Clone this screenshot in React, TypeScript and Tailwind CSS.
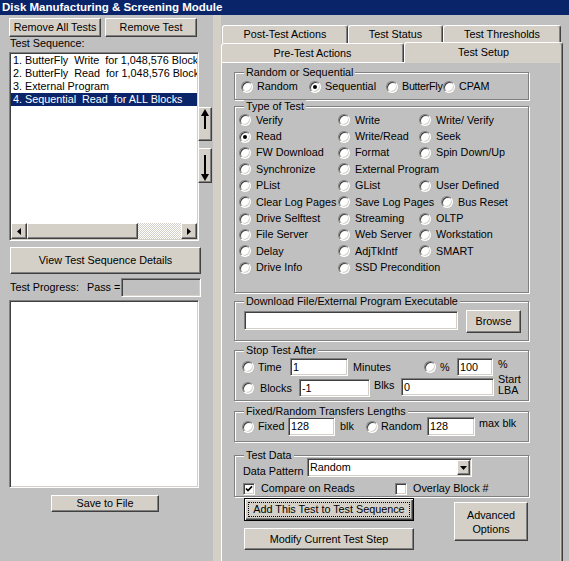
import React from 'react';

const raised =
  'bg-[#d4d0c8] border border-t-white border-l-white border-r-[#404040] border-b-[#404040] shadow-[inset_-1px_-1px_#808080]';
const sunkenEdge =
  'border border-t-[#808080] border-l-[#808080] border-r-white border-b-white shadow-[inset_1px_1px_#404040,inset_-1px_-1px_#d4d0c8]';
const sunken = `bg-white ${sunkenEdge}`;

const Btn: React.FC<{ className?: string; children?: React.ReactNode }> = ({ className = '', children }) => (
  <div className={`${raised} flex items-center justify-center whitespace-nowrap ${className}`}>{children}</div>
);

const Field: React.FC<{ className?: string; value?: string; gray?: boolean }> = ({ className = '', value, gray }) => (
  <div
    className={`${sunkenEdge} ${gray ? 'bg-[#c0c0c0]' : 'bg-white'} flex items-center pl-[2px] whitespace-nowrap overflow-hidden ${className}`}
  >
    {value}
  </div>
);

const Radio: React.FC<{ checked?: boolean }> = ({ checked }) => (
  <span className="flex w-[12px] h-[12px] shrink-0 items-center justify-center rounded-full bg-white border border-t-[#808080] border-l-[#808080] border-r-white border-b-white shadow-[inset_1px_1px_#404040,inset_-1px_-1px_#d4d0c8]">
    {checked && <span className="w-[4px] h-[4px] rounded-full bg-black" />}
  </span>
);

const Check: React.FC<{ checked?: boolean }> = ({ checked }) => (
  <span className="flex w-[12px] h-[12px] shrink-0 items-center justify-center bg-white border border-t-[#808080] border-l-[#808080] border-r-white border-b-white shadow-[inset_1px_1px_#404040,inset_-1px_-1px_#d4d0c8]">
    {checked && (
      <svg width="8" height="8" viewBox="0 0 8 8">
        <path d="M1 3.5 L3 5.6 L7 1.4" stroke="black" strokeWidth="1.7" fill="none" />
      </svg>
    )}
  </span>
);

const Option: React.FC<{ label: string; checked?: boolean; className?: string; gap?: string; labelClass?: string }> = ({
  label,
  checked,
  className = '',
  gap = 'gap-[4px]',
  labelClass = '',
}) => (
  <div className={`flex items-center whitespace-nowrap ${gap} ${className}`}>
    <Radio checked={checked} />
    <span className={labelClass}>{label}</span>
  </div>
);

const Group: React.FC<{ title: string; className?: string; children?: React.ReactNode }> = ({
  title,
  className = '',
  children,
}) => (
  <div
    className={`relative w-[295px] shrink-0 border border-[#808080] shadow-[1px_1px_0_#fff,inset_1px_1px_0_#fff] ${className}`}
  >
    <span className="absolute left-[9px] -top-[7px] px-[2px] bg-[#c0c0c0] whitespace-nowrap">{title}</span>
    {children}
  </div>
);

const ArrowLeft = () => (
  <svg width="4" height="7" viewBox="0 0 4 7">
    <polygon points="4,0 0,3.5 4,7" fill="black" />
  </svg>
);
const ArrowRight = () => (
  <svg width="4" height="7" viewBox="0 0 4 7">
    <polygon points="0,0 4,3.5 0,7" fill="black" />
  </svg>
);

type Cell = { label: string; checked?: boolean; clip?: boolean; shift?: boolean } | null;

const testTypes: Cell[][] = [
  [{ label: 'Verify' }, { label: 'Write' }, { label: 'Write/ Verify' }],
  [{ label: 'Read', checked: true }, { label: 'Write/Read' }, { label: 'Seek' }],
  [{ label: 'FW Download' }, { label: 'Format' }, { label: 'Spin Down/Up' }],
  [{ label: 'Synchronize' }, { label: 'External Program' }, null],
  [{ label: 'PList' }, { label: 'GList' }, { label: 'User Defined' }],
  [{ label: 'Clear Log Pages' }, { label: 'Save Log Pages' }, { label: 'Bus Reset', shift: true }],
  [{ label: 'Drive Selftest' }, { label: 'Streaming' }, { label: 'OLTP' }],
  [{ label: 'File Server' }, { label: 'Web Server', clip: true }, { label: 'Workstation' }],
  [{ label: 'Delay' }, { label: 'AdjTkIntf' }, { label: 'SMART' }],
  [{ label: 'Drive Info' }, { label: 'SSD Precondition' }, null],
];

const sequence = [
  '1. ButterFly  Write  for 1,048,576 Blocks',
  '2. ButterFly  Read  for 1,048,576 Blocks',
  '3. External Program',
  '4. Sequential  Read  for ALL Blocks',
];

function LeftPane() {
  return (
    <div className="w-[213px] shrink-0 flex flex-col pl-[9px] pt-[3px]">
      <div className="flex gap-[4px]">
        <Btn className="w-[92px] h-[19px]">Remove All Tests</Btn>
        <Btn className="w-[92px] h-[19px]">Remove Test</Btn>
      </div>
      <div className="pl-[1px] h-[13px] whitespace-nowrap">Test Sequence:</div>
      <div className="flex mt-[2px]">
        <div className={`${sunken} w-[190px] h-[189px] p-[1px] flex flex-col`}>
          <div className="flex-1 overflow-hidden">
            {sequence.map((s, i) => (
              <div
                key={i}
                className={`h-[13px] pl-[2px] whitespace-pre overflow-hidden ${
                  i === 3 ? 'bg-[#0a246a] text-white' : ''
                }`}
              >
                {s}
              </div>
            ))}
          </div>
          <div className="h-[16px] flex shrink-0">
            <Btn className="w-[16px] h-[16px]">
              <ArrowLeft />
            </Btn>
            <Btn className="w-[111px] h-[16px]" />
            <div className="flex-1 bg-[repeating-conic-gradient(#ffffff_0%_25%,#d4d0c8_0%_50%)] bg-[length:2px_2px]" />
            <Btn className="w-[16px] h-[16px]">
              <ArrowRight />
            </Btn>
          </div>
        </div>
        <div className="w-[14px] -ml-[1px] flex flex-col">
          <div className={`${raised} mt-[55px] h-[34px] flex justify-center items-start pt-[1px]`}>
            <svg width="10" height="20" viewBox="0 0 10 20">
              <polygon points="5,0 1,7 9,7" fill="black" />
              <rect x="4" y="6" width="2" height="14" fill="black" />
            </svg>
          </div>
          <div className={`${raised} mt-[7px] h-[35px] flex justify-center items-end pb-[1px]`}>
            <svg width="10" height="26" viewBox="0 0 10 26">
              <rect x="4" y="0" width="2" height="20" fill="black" />
              <polygon points="1,19 9,19 5,26" fill="black" />
            </svg>
          </div>
        </div>
      </div>
      <Btn className="mt-[6px] ml-[1px] w-[191px] h-[27px]">View Test Sequence Details</Btn>
      <div className="mt-[4px] w-[192px] h-[19px] flex items-center whitespace-nowrap">
        <span className="pl-[1px]">Test Progress:</span>
        <span className="ml-[8px]">Pass =</span>
        <Field gray className="ml-auto w-[80px] h-[19px]" />
      </div>
      <div className={`${sunken} mt-[3px] w-[190px] h-[188px]`} />
      <Btn className="mt-[7px] ml-[42px] w-[108px] h-[17px]">Save to File</Btn>
    </div>
  );
}

const backTab =
  'h-full bg-[#d4d0c8] border-t border-l border-t-white border-l-white border-r border-r-[#404040] rounded-t-[3px] shadow-[inset_-1px_0_#808080] flex items-center justify-center whitespace-nowrap';

function RightPane() {
  return (
    <div className="flex-1 pt-[10px] flex flex-col">
      <div className="w-[342px] flex-1 flex flex-col">
        <div className="flex h-[18px] pl-[1px]">
          <div className={`${backTab} w-[126px]`}>Post-Test Actions</div>
          <div className={`${backTab} w-[95px]`}>Test Status</div>
          <div className={`${backTab} w-[118px]`}>Test Thresholds</div>
        </div>
        <div className="flex h-[19px] items-start">
          <div className={`${backTab} w-[183px] h-[19px]`}>Pre-Test Actions</div>
          <div className="relative z-10 -mt-[1px] w-[159px] h-[21px] bg-[#d4d0c8] border-t border-l border-t-white border-l-white border-r border-r-[#404040] rounded-t-[3px] shadow-[inset_-1px_0_#808080] flex justify-center pt-[3px]">
            Test Setup
          </div>
        </div>
        <div className="flex-1 flex bg-[#d4d0c8] border-l border-t border-white border-r border-r-[#404040] shadow-[inset_-1px_0_#808080] pr-[2px]">
          <div className="flex-1 bg-[#c0c0c0] pl-[12px] pt-[9px] flex flex-col">
            <Group title="Random or Sequential" className="h-[28px] pt-[7px] pl-[6px]">
              <div className="flex items-center h-[13px]">
                <Option label="Random" className="w-[68px]" />
                <Option label="Sequential" checked className="w-[77px]" />
                <Option label="ButterFly" className="w-[57px]" labelClass="tracking-[-0.3px]" />
                <Option label="CPAM" />
              </div>
            </Group>

            <Group title="Type of Test" className="mt-[6px] h-[187px] pt-[5px] pl-[4px]">
              <div className="grid grid-cols-[99px_81px_1fr] auto-rows-[16.4px]">
                {testTypes.map((row, r) =>
                  row.map((c, ci) => (
                    <div
                      key={`${r}-${ci}`}
                      className={`flex items-center ${c?.clip ? 'overflow-hidden w-[81px]' : ''}`}
                    >
                      {c && (
                        <Option
                          label={c.label}
                          checked={c.checked}
                          gap="gap-[5px]"
                          className={c.shift ? 'ml-[22px]' : ''}
                        />
                      )}
                    </div>
                  ))
                )}
              </div>
            </Group>

            <Group title="Download File/External Program Executable" className="mt-[8px] h-[40px] pt-[9px] pl-[9px]">
              <div className="flex items-start">
                <Field className="w-[214px] h-[19px]" />
                <Btn className="ml-[8px] -mt-[1px] w-[55px] h-[23px]">Browse</Btn>
              </div>
            </Group>

            <Group title="Stop Test After" className="mt-[9px] h-[51px] pt-[7px] pl-[7px]">
              <div className="flex items-start">
                <div className="flex flex-col">
                  <div className="flex items-center h-[18px]">
                    <Option label="Time" className="w-[48px]" />
                    <Field value="1" className="w-[58px] h-[18px]" />
                    <span className="ml-[5px] w-[71px]">Minutes</span>
                    <Option label="%" className="w-[33px]" />
                    <Field value="100" className="w-[36px] h-[18px]" />
                  </div>
                  <div className="flex items-center h-[18px] mt-[3px]">
                    <Option label="Blocks" gap="gap-[6px]" className="w-[57px]" />
                    <Field value="-1" className="w-[71px] h-[18px]" />
                    <span className="ml-[4px] w-[27px] mb-[6px]">Blks</span>
                    <Field value="0" className="w-[93px] h-[18px] -mt-[2px]" />
                  </div>
                </div>
                <div className="ml-[4px] flex flex-col">
                  <span className="h-[13px]">%</span>
                  <span className="mt-[3px] leading-[11px]">Start</span>
                  <span className="leading-[11px]">LBA</span>
                </div>
              </div>
            </Group>

            <Group title="Fixed/Random Transfers Lengths" className="mt-[10px] h-[31px] pt-[5px] pl-[7px]">
              <div className="flex items-center h-[19px]">
                <Option label="Fixed" className="w-[46px]" />
                <Field value="128" className="w-[47px] h-[19px]" />
                <span className="ml-[5px] w-[26px]">blk</span>
                <Option label="Random" gap="gap-[3px]" className="w-[61px]" />
                <Field value="128" className="w-[48px] h-[19px]" />
                <span className="ml-[4px] mb-[6px] whitespace-nowrap">max blk</span>
              </div>
            </Group>

            <Group title="Test Data" className="mt-[13px] h-[42px] pt-[2px] pl-[8px]">
              <div className="flex items-start">
                <span className="w-[64px] mt-[7px] whitespace-nowrap">Data Pattern</span>
                <div className={`${sunken} w-[165px] h-[19px] p-[1px] flex items-center`}>
                  <span className="flex-1 pl-[1px]">Random</span>
                  <Btn className="w-[13px] h-[15px]">
                    <svg width="7" height="4" viewBox="0 0 7 4">
                      <polygon points="0,0 7,0 3.5,4" fill="black" />
                    </svg>
                  </Btn>
                </div>
              </div>
              <div className="flex items-center h-[13px] mt-[4px]">
                <div className="w-[152px] flex items-center gap-[6px]">
                  <Check checked />
                  <span>Compare on Reads</span>
                </div>
                <div className="flex items-center gap-[6px]">
                  <Check />
                  <span>Overlay Block #</span>
                </div>
              </div>
            </Group>

            <div className="mt-[1px] pl-[10px] flex items-start">
              <div className="flex flex-col gap-[7px]">
                <div className="w-[170px] h-[23px] border border-black bg-[#d4d0c8] shadow-[inset_1px_1px_#fff,inset_-1px_-1px_#404040,inset_-2px_-2px_#808080] p-[3px] flex">
                  <div className="flex-1 border border-dotted border-black flex items-center justify-center whitespace-nowrap">
                    Add This Test to Test Sequence
                  </div>
                </div>
                <Btn className="w-[170px] h-[22px]">Modify Current Test Step</Btn>
              </div>
              <Btn className="ml-[40px] mt-[4px] w-[74px] h-[39px] flex-col leading-[14px]">
                <span>Advanced</span>
                <span>Options</span>
              </Btn>
            </div>
          </div>
        </div>
      </div>
    </div>
  );
}

export default function App() {
  return (
    <div className="w-[569px] h-[561px] overflow-hidden bg-[#c0c0c0] text-black text-[10.8px] leading-[13px] font-['Liberation_Sans',Arial,sans-serif] flex flex-col select-none">
      <div className="h-[15px] shrink-0 bg-[#0a246a] text-white font-bold text-[11.5px] leading-[15px] pl-[2px] whitespace-nowrap">
        Disk Manufacturing &amp; Screening Module
      </div>
      <div className="flex flex-1 min-h-0">
        <LeftPane />
        <div className="w-[8px] shrink-0 bg-[#d4d0c8]" />
        <RightPane />
      </div>
    </div>
  );
}
